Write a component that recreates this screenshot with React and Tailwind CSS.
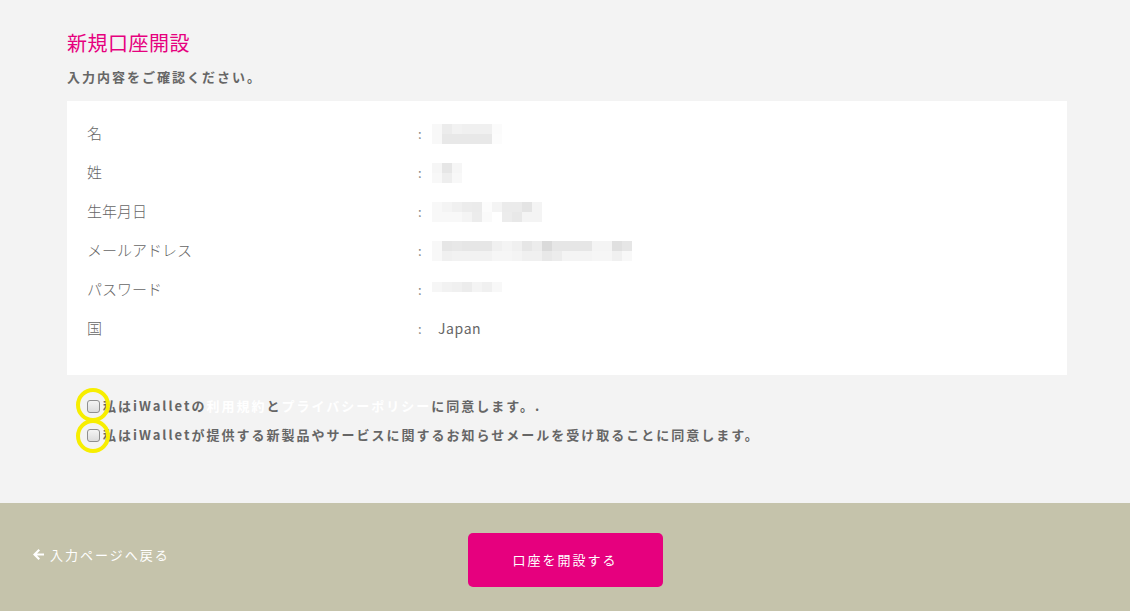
import React from 'react';

// ぼかし済みの入力値（モザイク）
const mosaic = {
  firstName: [
    ['bg-[#f8f8f8]', 'bg-[#ececec]', 'bg-[#f2f2f2]', 'bg-[#f0f0f0]', 'bg-[#f0f0f0]', 'bg-[#f0f0f0]', 'bg-[#fbfbfb]'],
    ['bg-[#f8f8f8]', 'bg-[#e8e8e8]', 'bg-[#e8e8e8]', 'bg-[#e8e8e8]', 'bg-[#e8e8e8]', 'bg-[#e8e8e8]', 'bg-[#fcfcfc]'],
  ],
  lastName: [
    ['bg-[#f6f6f6]', 'bg-[#e6e6e6]', 'bg-[#f6f6f6]'],
    ['bg-[#f8f8f8]', 'bg-[#eeeeee]', 'bg-[#f8f8f8]'],
  ],
  birthday: [
    ['bg-[#f8f8f8]', 'bg-[#f4f4f4]', 'bg-[#f0f0f0]', 'bg-[#ececec]', 'bg-[#ebebeb]', 'bg-[#fcfcfc]', 'bg-[#f4f4f4]', 'bg-[#ebebeb]', 'bg-[#ebebeb]', 'bg-[#e4e4e4]', 'bg-[#f4f4f4]'],
    ['bg-[#f8f8f8]', 'bg-[#f8f8f8]', 'bg-[#f8f8f8]', 'bg-[#f4f4f4]', 'bg-[#ececec]', 'bg-[#fafafa]', 'bg-[#ffffff]', 'bg-[#ececec]', 'bg-[#e8e8e8]', 'bg-[#f4f4f4]', 'bg-[#f4f4f4]'],
  ],
  email: [
    ['bg-[#f8f8f8]', 'bg-[#e6e6e6]', 'bg-[#e8e8e8]', 'bg-[#e6e6e6]', 'bg-[#e6e6e6]', 'bg-[#e6e6e6]', 'bg-[#f0f0f0]', 'bg-[#f4f4f4]', 'bg-[#f0f0f0]', 'bg-[#e6e6e6]', 'bg-[#ececec]', 'bg-[#dadada]', 'bg-[#e6e6e6]', 'bg-[#e6e6e6]', 'bg-[#e6e6e6]', 'bg-[#e6e6e6]', 'bg-[#f4f4f4]', 'bg-[#f4f4f4]', 'bg-[#e0e0e0]', 'bg-[#e6e6e6]'],
    ['bg-[#f8f8f8]', 'bg-[#f0f0f0]', 'bg-[#f2f2f2]', 'bg-[#f2f2f2]', 'bg-[#f2f2f2]', 'bg-[#f2f2f2]', 'bg-[#f6f6f6]', 'bg-[#f6f6f6]', 'bg-[#f4f4f4]', 'bg-[#f0f0f0]', 'bg-[#f0f0f0]', 'bg-[#e8e8e8]', 'bg-[#ececec]', 'bg-[#f4f4f4]', 'bg-[#f4f4f4]', 'bg-[#f4f4f4]', 'bg-[#f6f6f6]', 'bg-[#f6f6f6]', 'bg-[#f0f0f0]', 'bg-[#f8f8f8]'],
  ],
  password: [
    ['bg-[#f6f6f6]', 'bg-[#f2f2f2]', 'bg-[#f0f0f0]', 'bg-[#ececec]', 'bg-[#f4f4f4]', 'bg-[#f0f0f0]', 'bg-[#f8f8f8]'],
  ],
};

const Mosaic = ({ rows }) => (
  <div className="flex flex-col">
    {rows.map((row, i) => (
      <div key={i} className="flex">
        {row.map((c, j) => (
          <div key={j} className={`w-[10px] h-[10px] ${c}`} />
        ))}
      </div>
    ))}
  </div>
);

const rows = [
  { label: '名', value: <Mosaic rows={mosaic.firstName} /> },
  { label: '姓', value: <Mosaic rows={mosaic.lastName} /> },
  { label: '生年月日', value: <Mosaic rows={mosaic.birthday} /> },
  { label: 'メールアドレス', value: <Mosaic rows={mosaic.email} /> },
  { label: 'パスワード', value: <div className="mt-[-6px]"><Mosaic rows={mosaic.password} /></div> },
  { label: '国', value: <span className="ml-[6px] text-[14px] tracking-[0.6px] text-[#666]">Japan</span> },
];

const font = { fontFamily: '"Noto Sans CJK JP", "Noto Sans", sans-serif' };

const Checkbox = () => (
  <span className="inline-block w-[13px] h-[13px] rounded-[3px] border border-[#8f8f8f] bg-gradient-to-b from-[#f4f4f4] to-[#dcdcdc] shrink-0" />
);

export default function App() {
  return (
    <div className="w-[1130px] h-[611px] flex flex-col bg-[#f3f3f3] overflow-hidden" style={font}>
      {/* MAIN */}
      <div className="h-[503px] px-[67px] pt-[30px] relative">
        <h1 className="text-[20px] leading-[26px] text-[#e6007e] font-normal tracking-[0.5px]">新規口座開設</h1>
        <p className="mt-[11px] text-[13px] leading-[20px] font-bold text-[#666] tracking-[2px]">入力内容をご確認ください。</p>

        {/* 確認テーブル */}
        <div className="mt-[14px] w-[1000px] bg-white pl-[20px] pt-[13px] pb-[27px]">
          {rows.map((r) => (
            <div key={r.label} className="h-[39px] flex items-center">
              <div className="w-[331px] text-[15px] text-[#666] font-light">{r.label}</div>
              <div className="w-[14px] text-[13px] text-[#888]">:</div>
              <div className="flex items-center">{r.value}</div>
            </div>
          ))}
        </div>

        {/* 同意チェック */}
        <div className="mt-[22px] pl-[20px] flex flex-col gap-[11px] text-[13px] leading-[18px] font-bold text-[#666] tracking-[2px]">
          <label className="flex items-center gap-[3px]">
            <Checkbox />
            <span>
              私はiWalletの<span className="text-white">利用規約</span>と<span className="text-white">プライバシーポリシー</span>に同意します。.
            </span>
          </label>
          <label className="flex items-center gap-[3px]">
            <Checkbox />
            <span>私はiWalletが提供する新製品やサービスに関するお知らせメールを受け取ることに同意します。</span>
          </label>
        </div>

        {/* 注釈の黄色い丸 */}
        <div className="absolute left-[76px] top-[388px] w-[34px] h-[34px] rounded-full border-[4px] border-[#f7ee00]" />
        <div className="absolute left-[76px] top-[419px] w-[34px] h-[34px] rounded-full border-[4px] border-[#f7ee00]" />
      </div>

      {/* FOOTER */}
      <div className="flex-1 bg-[#c5c3ab] grid grid-cols-[1fr_auto_1fr] items-start pt-[30px]">
        <a className="pl-[32px] mt-[12px] flex items-center gap-[5px] text-white text-[13px] tracking-[2px] cursor-pointer">
          <svg width="13" height="13" viewBox="0 0 13 13" fill="white">
            <path d="M6.5 1 L8 2.5 L5 5.4 L12 5.4 L12 7.6 L5 7.6 L8 10.5 L6.5 12 L1 6.5 Z" />
          </svg>
          入力ページへ戻る
        </a>
        <button className="w-[195px] h-[54px] rounded-[5px] bg-[#e6007e] text-white text-[13px] tracking-[2px]">
          口座を開設する
        </button>
        <div />
      </div>
    </div>
  );
}
